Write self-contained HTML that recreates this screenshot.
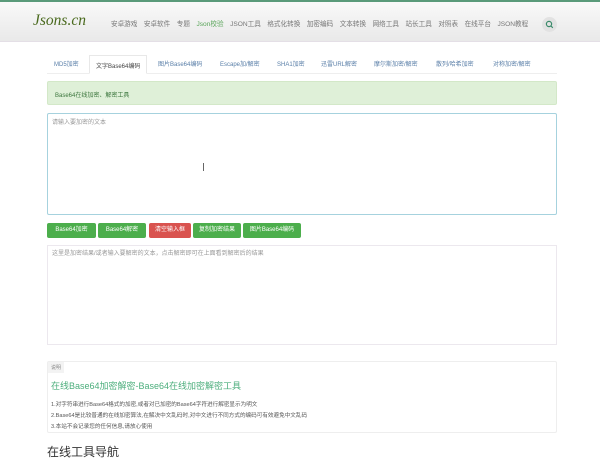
<!DOCTYPE html>
<html><head><meta charset="utf-8"><style>
*{box-sizing:border-box;margin:0;padding:0}
body{width:600px;height:446px;overflow:hidden;background:#fff;font-family:"Liberation Sans","Noto Sans CJK SC",sans-serif;font-size:6px;color:#555;position:relative}
.hdr{position:absolute;left:0;top:0;width:600px;height:42px;background:linear-gradient(#f9f9f9,#e9e9e9);border-top:2px solid #5a9a7a;border-bottom:1px solid #e4dfe6}
.logo{position:absolute;left:33px;top:10px;font-family:"Liberation Serif",serif;font-style:italic;font-size:15.5px;color:#4a6a1e}
.nav{position:absolute;left:111px;top:16px;font-size:6.6px;color:#777;white-space:nowrap}
.nav span{margin-right:6.5px}
.srch{position:absolute;left:542px;top:15px;width:15px;height:15px;border-radius:50%;background:#e2e2e2}
.tabs{position:absolute;left:47px;top:55px;width:510px;height:19px;border-bottom:1px solid #eee}
.tab{position:absolute;top:4px;font-size:6px;color:#5a7fa8;white-space:nowrap}
.tab.a{top:0;height:19px;border:1px solid #e8e8e8;border-bottom:1px solid #fff;background:#fff;color:#444;padding:5px 6px 0}
.alert{position:absolute;left:47px;top:81px;width:510px;height:24px;background:#dff0d8;border:1px solid #d3e8c8;border-radius:2px;padding:8px 7px;font-size:6px;color:#3c763d}
.ta{position:absolute;left:47px;width:510px;background:#fff}
.t1{top:113px;height:102px;border:1px solid #a6d2de;border-radius:2px;padding:3px 4px;color:#999}
.t2{top:245px;height:100px;border:1px solid #ece8ee;padding:2px 4px;color:#999}
.btns{position:absolute;left:47px;top:223px}
.b{position:absolute;top:0;height:15px;border-radius:2px;color:#fff;font-size:6px;text-align:center;line-height:15px;background:#4cae4c}
.panel{position:absolute;left:47px;top:361px;width:510px;height:72px;border:1px solid #eee;border-radius:2px}
.lbl{position:absolute;left:0;top:0;background:#f3f3f3;color:#888;font-size:5px;padding:2px 3px;height:11px}
.ttl{position:absolute;left:3px;top:17px;font-size:9px;color:#4cae7c}
.li{position:absolute;left:3px;font-size:5.6px;color:#555}
.nv{position:absolute;left:47px;top:443px;font-size:12px;color:#333}
</style></head><body>
<div class="hdr">
<div class="logo">Jsons.cn</div>
<div class="nav"><span>安卓游戏</span><span>安卓软件</span><span>专题</span><span style="color:#5aa55a">Json校验</span><span>JSON工具</span><span>格式化转换</span><span>加密编码</span><span>文本转换</span><span>网络工具</span><span>站长工具</span><span>对照表</span><span>在线平台</span><span>JSON教程</span></div>
<div class="srch"><svg width="15" height="15" viewBox="0 0 15 15"><circle cx="7" cy="7" r="2.6" fill="none" stroke="#3a8a6a" stroke-width="1.2"/><line x1="9" y1="9" x2="10.8" y2="10.8" stroke="#3a8a6a" stroke-width="1.2"/></svg></div>
</div>
<div class="tabs">
<div class="tab" style="left:7px">MD5加密</div>
<div class="tab a" style="left:42px">文字Base64编码</div>
<div class="tab" style="left:111px">图片Base64编码</div>
<div class="tab" style="left:173px">Escape加/解密</div>
<div class="tab" style="left:230px">SHA1加密</div>
<div class="tab" style="left:274px">迅雷URL解密</div>
<div class="tab" style="left:327px">摩尔斯加密/解密</div>
<div class="tab" style="left:389px">散列/哈希加密</div>
<div class="tab" style="left:446px">对称加密/解密</div>
</div>
<div class="alert">Base64在线加密、解密工具</div>
<div class="ta t1">请输入要加密的文本</div>
<div style="position:absolute;left:203px;top:163px;width:1px;height:8px;border-left:1px solid #666"></div>
<div class="btns">
<div class="b" style="left:0;width:49px">Base64加密</div>
<div class="b" style="left:51px;width:48px">Base64解密</div>
<div class="b" style="left:102px;width:42px;background:#d9534f">清空输入框</div>
<div class="b" style="left:146px;width:48px">复制加密结果</div>
<div class="b" style="left:196px;width:58px">图片Base64编码</div>
</div>
<div class="ta t2">这里是加密结果/或者输入要解密的文本，点击解密即可在上面看到解密后的结果</div>
<div class="panel">
<div class="lbl">说明</div>
<div class="ttl">在线Base64加密解密-Base64在线加密解密工具</div>
<div class="li" style="top:38px">1.对字符串进行Base64格式的加密,或者对已加密的Base64字符进行解密显示为明文</div>
<div class="li" style="top:49px">2.Base64是比较普通的在线加密算法,在解决中文乱码时,对中文进行不同方式的编码可有效避免中文乱码</div>
<div class="li" style="top:60px">3.本站不会记录您的任何信息,请放心使用</div>
</div>
<div class="nv">在线工具导航</div>
</body></html>
